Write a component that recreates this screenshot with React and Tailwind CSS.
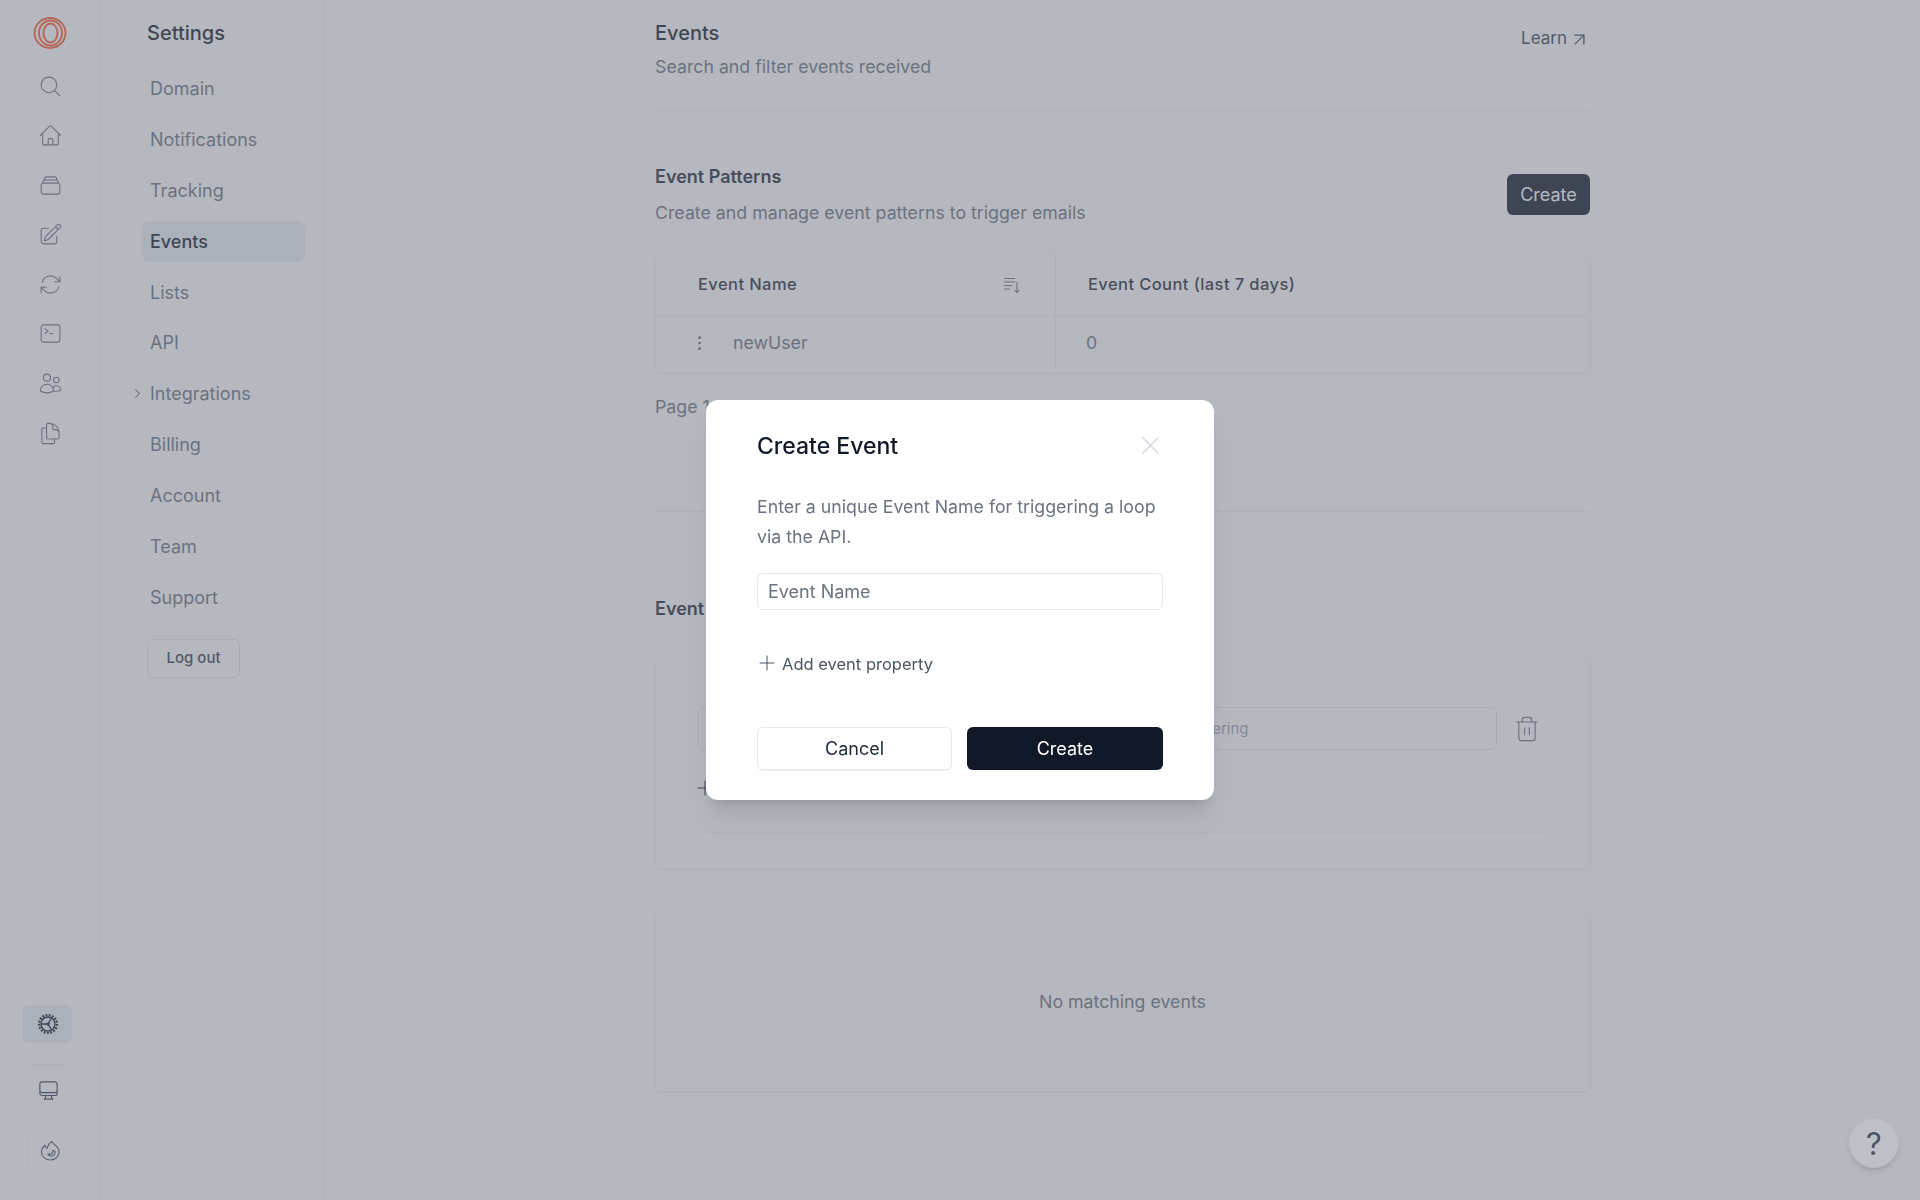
import { ArrowUpRight, ChevronRight, Plus, Trash2, X } from 'lucide-react';
import {
  HiOutlineMagnifyingGlass,
  HiOutlineHome,
  HiOutlineRectangleStack,
  HiOutlinePencilSquare,
  HiOutlineArrowPath,
  HiOutlineCommandLine,
  HiOutlineUsers,
  HiOutlineDocumentDuplicate,
  HiOutlineComputerDesktop,
} from 'react-icons/hi2';

const RAIL_ICONS = [
  HiOutlineMagnifyingGlass,
  HiOutlineHome,
  HiOutlineRectangleStack,
  HiOutlinePencilSquare,
  HiOutlineArrowPath,
  HiOutlineCommandLine,
  HiOutlineUsers,
  HiOutlineDocumentDuplicate,
];

const NAV_ITEMS = ['Domain', 'Notifications', 'Tracking', 'Events', 'Lists', 'API', 'Integrations', 'Billing', 'Account', 'Team', 'Support'];

function Logo() {
  return (
    <svg width="36" height="34" viewBox="0 0 36 34" fill="none" stroke="#ff5f2e" strokeWidth="1.9">
      <ellipse cx="18" cy="17" rx="15.5" ry="15" />
      <ellipse cx="18.5" cy="17" rx="11.5" ry="12.5" />
      <ellipse cx="18.5" cy="17" rx="7" ry="9.5" />
    </svg>
  );
}

function SortIcon() {
  return (
    <svg width="18" height="18" viewBox="0 0 18 18" fill="none" stroke="#6b7280" strokeWidth="1.1">
      <path d="M1 2.5h11M1 6h11M1 9.5h8M1 13h6M14 6v10.5M11.8 14.3 14 16.5l2.2-2.2" />
    </svg>
  );
}

function CogIcon() {
  return (
    <svg width="22" height="22" viewBox="0 0 22 22" fill="none" stroke="currentColor">
      <circle cx="11" cy="11" r="9" strokeWidth="2.2" strokeDasharray="1.9 1.4" />
      <circle cx="11" cy="11" r="7" strokeWidth="1.4" />
      <path d="M11 11H4.500M11 11l3.500-6M11 11l3.500 6" strokeWidth="1.4" />
      <circle cx="11" cy="11" r="1.6" fill="currentColor" strokeWidth="0" />
    </svg>
  );
}

function FlameIcon() {
  return (
    <svg width="24" height="24" viewBox="0 0 24 24" fill="none" stroke="currentColor" strokeWidth="1.1" strokeLinejoin="round">
      <path d="M13 2.5c.6 2.6 3.4 3.4 5.6 6 2.9 3.6 1.6 11.6-6.6 12.5-6 .2-9.5-3.8-9.5-8 0-3 1.6-5.200 3.600-6.800.2 1.500.9 2.600 2.300 3.100C8.600 6.800 10.400 4 13 2.500z" />
      <path d="M16 12.500c.3 2.600-1.700 4.700-4.200 4.500-1.600-.1-2.800-1-3.100-2.300 1.700.7 3.300.4 4.300-.6.700-.7 1-1.500.9-2.600.9 0 1.800.2 2.100 1z" />
    </svg>
  );
}

function Rail() {
  return (
    <div className="flex h-full w-[101px] shrink-0 flex-col border-r border-[#f0f1f3]">
      <div className="flex h-[61.5px] items-start justify-center pt-[16px]">
        <Logo />
      </div>
      {RAIL_ICONS.map((Icon, i) => (
        <div key={i} className="flex h-[49.6px] items-start justify-center pt-[12px] text-[#6b7280]">
          <Icon size={25} strokeWidth={1.05} />
        </div>
      ))}
      <div className="mt-auto flex flex-col items-start pb-[27px]">
        <div className="ml-[23px] flex h-[38px] w-[49px] items-center justify-center rounded-md bg-[#e8f0f4] text-[#111827]">
          <CogIcon />
        </div>
        <div className="ml-[32px] mt-[21px] h-px w-[32px] bg-[#f0f1f3]" />
        <div className="ml-[23px] flex h-[50px] w-[50px] items-center justify-center text-[#374151]">
          <HiOutlineComputerDesktop size={23} strokeWidth={1.2} />
        </div>
        <div className="ml-[27px] mt-[11px] flex h-[47px] w-[47px] items-center justify-center rounded-lg border border-[#f7f7f8] pt-[2px] text-[#4b5563]">
          <FlameIcon />
        </div>
      </div>
    </div>
  );
}

function SettingsNav() {
  return (
    <div className="h-full w-[224px] shrink-0 border-r border-[#f0f1f3] pl-[41px] pr-[19px]">
      <div className="pl-[5px] pt-[19px] text-[20px] leading-[28px] font-medium text-[#111827]">Settings</div>
      <div className="mt-[21px] flex flex-col gap-[9.9px]">
        {NAV_ITEMS.map((item) => (
          <div
            key={item}
            className={`relative flex h-[41px] items-center rounded-lg pl-[8px] text-[18px] ${
              item === 'Events' ? 'bg-[#e8f0f4] font-medium text-[#111827]' : 'text-[#6b7280]'
            }`}
          >
            {item === 'Integrations' && (
              <ChevronRight size={15} strokeWidth={1.6} className="absolute left-[-12px] top-[13px] text-[#374151]" />
            )}
            {item}
          </div>
        ))}
      </div>
      <button className="ml-[5px] mt-[21px] h-[39px] w-[93px] rounded-md border border-[#e5e7eb] text-[15px] font-medium text-[#374151] shadow-[0_1px_1px_rgba(0,0,0,0.05)]">
        Log out
      </button>
    </div>
  );
}

function Content() {
  return (
    <div className="ml-[330px] w-[935px] shrink-0 text-[17.75px]">
      {/* page header */}
      <div className="flex justify-between border-b border-[#f0f1f3] pb-[29px] pt-[19px]">
        <div>
          <div className="text-[20px] leading-[28px] font-medium text-[#111827]">Events</div>
          <div className="mt-[6px] leading-[28px] text-[#6b7280]">Search and filter events received</div>
        </div>
        <div className="mr-[0px] mt-[6px] flex h-[28px] items-center gap-[2px] text-[17px] text-[#374151]">
          Learn <ArrowUpRight size={21} strokeWidth={1.5} />
        </div>
      </div>

      {/* event patterns */}
      <div className="mt-[52px] flex items-start justify-between">
        <div>
          <div className="text-[18px] leading-[28px] font-semibold text-[#1f2937]">Event Patterns</div>
          <div className="mt-[8px] leading-[28px] text-[#6b7280]">Create and manage event patterns to trigger emails</div>
        </div>
        <button className="mt-[11px] h-[41px] w-[83px] rounded-md bg-[#111827] text-[18px] text-white">Create</button>
      </div>
      <div className="mt-[26px] rounded-md border border-[#f7f7f8] shadow-[0_1px_2px_rgba(0,0,0,0.08)]">
        <div className="flex h-[62px] border-b border-[#f0f1f3] text-[16.5px] font-medium tracking-wide text-[#1f2937]">
          <div className="flex w-[400px] items-center justify-between border-r border-[#f0f1f3] pl-[42px] pr-[34px]">
            Event Name <SortIcon />
          </div>
          <div className="flex items-center pl-[32px]">Event Count (last 7 days)</div>
        </div>
        <div className="flex h-[56px] pb-[2px] text-[#6b7280]">
          <div className="flex w-[400px] items-center border-r border-[#f0f1f3] pl-[42px]">
            <div className="flex w-[35px] flex-col gap-[3px]">
              <span className="h-[2.5px] w-[2.5px] rounded-full bg-[#6b7280]" />
              <span className="h-[2.5px] w-[2.5px] rounded-full bg-[#6b7280]" />
              <span className="h-[2.5px] w-[2.5px] rounded-full bg-[#6b7280]" />
            </div>
            newUser
          </div>
          <div className="flex items-center pl-[30px]">0</div>
        </div>
      </div>
      <div className="mt-[20px] border-b border-[#f0f1f3] pb-[90px] leading-[28px] text-[#6b7280]">Page 1</div>

      {/* event filters */}
      <div className="mt-[83px] text-[18px] leading-[28px] font-semibold text-[#1f2937]">Event Filters</div>
      <div className="mt-[32px] h-[214px] rounded-md border border-[#f7f7f8] pl-[42px] pr-[40px] pt-[51px] shadow-[0_1px_2px_rgba(0,0,0,0.08)]">
        <div className="flex items-center">
          <input className="h-[43px] w-[390px] rounded-md border border-[#e5e7eb] px-3 text-[15px]" />
          <input
            placeholder="Value for filtering"
            className="ml-[9px] h-[43px] w-[400px] rounded-md border border-[#e5e7eb] pl-[29px] text-[15px] placeholder:text-[#9ca3af]"
          />
          <Trash2 size={28} strokeWidth={0.95} className="ml-[16px] text-[#6b7280]" />
        </div>
        <div className="-ml-[5px] mt-[26px] flex h-[24px] items-center gap-[8px] text-[16px] text-[#1f2937]">
          <Plus size={24} strokeWidth={1.1} /> Add filter
        </div>
        <div className="mt-[32px] border-t border-[#f3f4f6]" />
      </div>

      {/* results */}
      <div className="mt-[41px] flex h-[182px] items-center justify-center rounded-md border border-[#f7f7f8] pt-[2px] text-[#6b7280] shadow-[0_1px_2px_rgba(0,0,0,0.08)]">
        No matching events
      </div>
    </div>
  );
}

function CreateEventModal() {
  return (
    <div className="fixed inset-0 z-10 flex items-center justify-center bg-[#6b7280]/50">
      <div className="h-[400px] w-[508px] rounded-xl bg-white px-[51px] pt-[31px] shadow-[0_20px_25px_-5px_rgba(0,0,0,0.1),0_8px_10px_-6px_rgba(0,0,0,0.1)]">
        <div className="flex h-[30px] items-center justify-between">
          <span className="text-[23px] font-medium text-[#111827]">Create Event</span>
          <X size={31} strokeWidth={0.9} className="-mr-[3px] -mt-[1px] text-[#d1d5db]" />
        </div>
        <p className="mt-[31px] text-[17.75px] leading-[30px] text-[#6b7280]">
          Enter a unique Event Name for triggering a loop via the API.
        </p>
        <input
          placeholder="Event Name"
          className="mt-[21px] h-[37px] w-full rounded-md border border-[#e5e7eb] pl-[10px] text-[18px] placeholder:text-[#6b7280]"
        />
        <div className="mt-[39px] flex h-[30px] items-center gap-[3px] text-[16.5px] text-[#4b5563]">
          <Plus size={24} strokeWidth={1} className="-ml-[2px] -mt-[2px]" />
          Add event property
        </div>
        <div className="mt-[48px] flex gap-[15px]">
          <button className="h-[43px] w-[195px] rounded-md border border-[#e5e7eb] text-[18px] text-[#1f2937] shadow-[0_1px_1px_rgba(0,0,0,0.05)]">Cancel</button>
          <button className="h-[43px] flex-1 rounded-md bg-[#111827] text-[18px] text-white">Create</button>
        </div>
      </div>
    </div>
  );
}

export default function App() {
  return (
    <div className="flex h-screen w-screen overflow-hidden bg-white font-['Inter',sans-serif]">
      <Rail />
      <SettingsNav />
      <Content />
      <CreateEventModal />
      <button className="fixed bottom-[32px] right-[21px] z-20 flex h-[50px] w-[50px] items-center justify-center rounded-full border border-[#b9bcc4] bg-[#bdc0c7] text-[31px] leading-none text-[#4b5563] shadow-md">
        ?
      </button>
    </div>
  );
}
